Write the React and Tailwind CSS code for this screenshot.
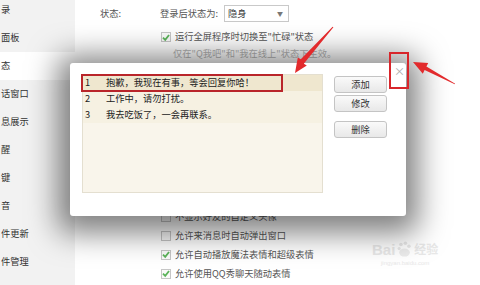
const font = { fontFamily: '"Noto Sans CJK SC", "Noto Sans", sans-serif' };

const sideItems = ["录", "面板", "态", "话窗口", "息展示", "醒", "键", "音", "件更新", "件管理"];

const replies = [
    "抱歉，我现在有事，等会回复你哈！",
    "工作中，请勿打扰。",
    "我去吃饭了，一会再联系。",
];

const CheckBox = ({ checked }) => (
    <span className="w-[10px] h-[10px] border border-[#c6c6c6] bg-[#fafafa] flex items-center justify-center">
        {checked && (
            <svg width="9" height="9" viewBox="0 0 10 10">
                <path d="M1.2 5.2 L4 8 L8.8 1.8" fill="none" stroke="#5bb35a" strokeWidth="2.2" />
            </svg>
        )}
    </span>
);

const CheckRow = ({ checked, text }) => (
    <div className="h-[19px] flex items-center pl-[61px] gap-[4px] text-[#555]">
        <CheckBox checked={checked} />
        <span>{text}</span>
    </div>
);

const Btn = ({ label, className }) => (
    <div className={`h-[17px] w-[53px] border border-[#c4c4c4] rounded-[3px] bg-gradient-to-b from-[#fafafa] to-[#e8e8e8] flex items-center justify-center text-[#333] ${className}`}>
        {label}
    </div>
);

const App = () => {
    return (
        <div className="relative w-[480px] h-[285px] overflow-hidden bg-white flex text-[9.25px] leading-none" style={font}>
            {/* barra lateral */}
            <aside className="w-[75px] bg-[#f2f2f2] flex flex-col -mt-1">
                {sideItems.map((t, i) => (
                    <div
                        key={t}
                        className={`h-[28px] flex items-center pl-[1px] text-[#333] ${i === 2 ? "bg-white" : ""}`}
                    >
                        {t}
                    </div>
                ))}
            </aside>

            {/* contenido */}
            <main className="flex-1 flex flex-col pl-[25px] pt-[5px]">
                <div className="h-[17px] flex items-center">
                    <span className="w-[60px] text-[#555]">状态:</span>
                    <span className="text-[#555]">登录后状态为:</span>
                    <div className="ml-[6px] w-[65px] h-[17px] border border-[#c9c9c9] bg-white flex items-center justify-between pl-[3px] pr-[5px]">
                        <span className="text-[#333]">隐身</span>
                        <span className="text-[#777] text-[6px]">▼</span>
                    </div>
                </div>
                <div className="h-[12px] mt-[9px] flex items-center pl-[61px] gap-[4px] text-[#555]">
                    <CheckBox checked />
                    <span>运行全屏程序时切换至"忙碌"状态</span>
                </div>
                <div className="h-[12px] mt-[5px] flex items-center pl-[73px] text-[#b4b4b4]">
                    仅在"Q我吧"和"我在线上"状态下生效。
                </div>
                <div className="mt-[147px] flex flex-col">
                    <CheckRow checked={false} text="不显示好友的自定义头像" />
                    <CheckRow checked={false} text="允许来消息时自动弹出窗口" />
                    <CheckRow checked text="允许自动播放魔法表情和超级表情" />
                    <CheckRow checked text="允许使用QQ秀聊天随动表情" />
                </div>
            </main>

            {/* marca de agua */}
            <div className="absolute left-[372px] top-[240px] flex flex-col items-center text-[#e8e8e8]">
                <div className="flex items-center gap-[2px] h-[18px]">
                    <span className="text-[15px] font-bold" style={{ fontFamily: '"Liberation Sans", sans-serif' }}>Bai</span>
                    <svg width="15" height="16" viewBox="0 0 16 18">
                        <circle cx="4" cy="4" r="2" fill="#e8e8e8" />
                        <circle cx="9" cy="2.5" r="2" fill="#e8e8e8" />
                        <circle cx="13" cy="6" r="2" fill="#e8e8e8" />
                        <circle cx="2" cy="8.5" r="1.8" fill="#e8e8e8" />
                        <ellipse cx="8" cy="13" rx="6" ry="4.5" fill="#ececec" />
                    </svg>
                    <span className="text-[12px] font-bold">经验</span>
                </div>
                <span className="text-[6px] mt-[2px]" style={{ fontFamily: '"Liberation Sans", sans-serif' }}>jingyan.baidu.com</span>
            </div>

            {/* diálogo */}
            <div className="absolute left-[70px] top-[63px] w-[336px] h-[153px] bg-white rounded-[3px] shadow-[0_5px_30px_12px_rgba(0,0,0,0.5)] flex pl-[12px] pt-[11px]">
                <div className="w-[241px] h-[119px] border border-[#e4dfd0] bg-[#f9f5eb] flex flex-col">
                    {replies.map((r, i) => (
                        <div
                            key={r}
                            className={`h-[16px] flex items-center ${i === 0 ? "bg-[#efe7cf]" : "bg-[#f6f1e2]"} text-[#222]`}
                        >
                            <span className="w-[23px] pl-[2px]">{i + 1}</span>
                            <span>{r}</span>
                        </div>
                    ))}
                </div>
                <div className="ml-[11px] pt-[2px] flex flex-col">
                    <Btn label="添加" />
                    <Btn label="修改" className="mt-[2px]" />
                    <Btn label="删除" className="mt-[9px]" />
                </div>
                <span className="absolute left-[324px] top-[3px] text-[11px] text-[#aaa]">×</span>
            </div>

            {/* anotaciones */}
            <div className="absolute left-[81px] top-[74px] w-[202px] h-[18px] border-2 border-[#b9252a]" />
            <div className="absolute left-[389px] top-[52px] w-[20px] h-[37px] border-[2.5px] border-[#d8262b]" />
            <svg className="absolute left-0 top-0 pointer-events-none" width="480" height="285">
                <polygon
                    points="333.4,27.3 303.8,63.8 306.8,65.5 295,73 297.8,57.5 300.8,59.2 332.6,26.7"
                    fill="#e22a2c"
                />
                <polygon
                    points="455.2,83.8 426.4,66.5 428.2,62.9 413,62 422.8,73.7 424.6,70.1 454.8,84.2"
                    fill="#e22a2c"
                />
            </svg>
        </div>
    );
};

export default App;
